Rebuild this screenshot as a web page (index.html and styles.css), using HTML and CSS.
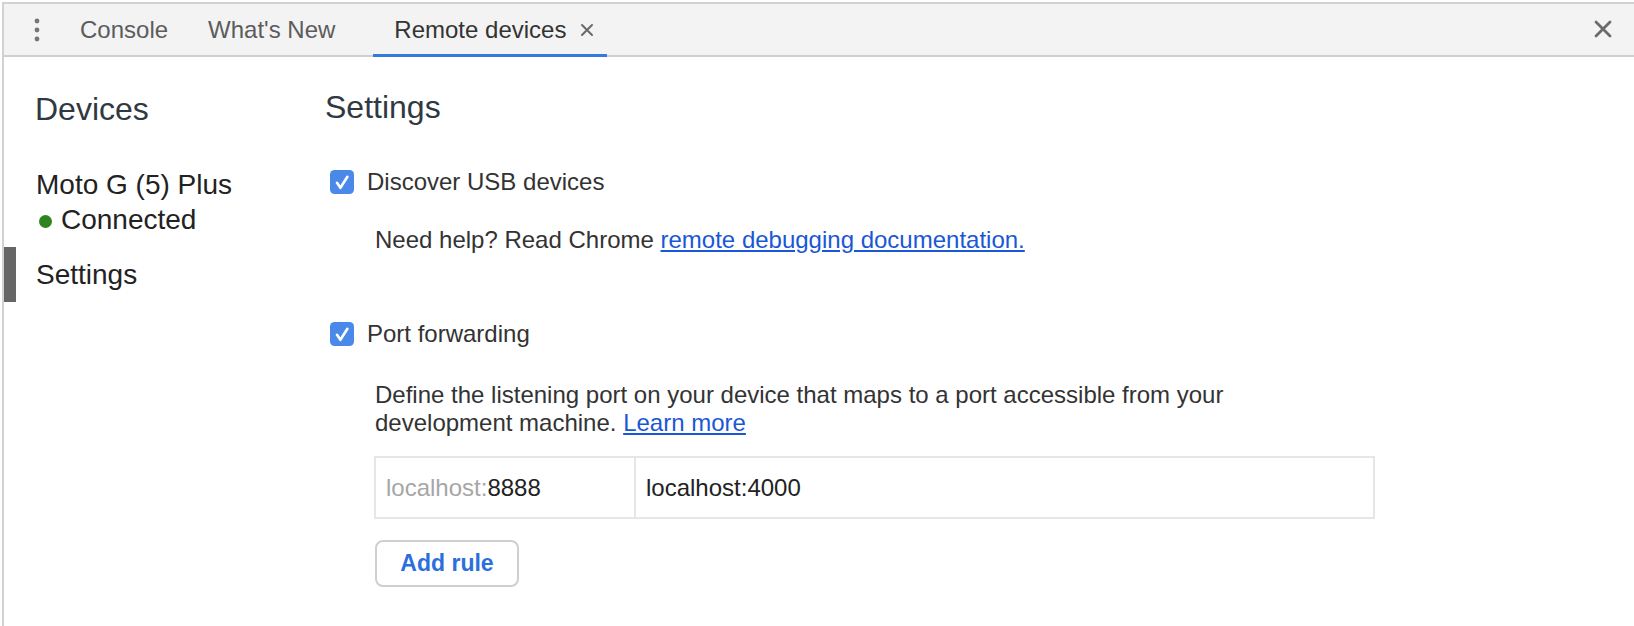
FILE: index.html
```html
<!DOCTYPE html>
<html lang="en">
<head>
<meta charset="utf-8">
<title>Remote devices</title>
<link rel="stylesheet" href="styles.css">
</head>
<body>
<div class="frame">
  <div class="tabbar">
    <div class="menu">
      <svg width="6" height="24" viewBox="0 0 6 24"><circle cx="3" cy="3" r="2.4" fill="#757575"/><circle cx="3" cy="12" r="2.4" fill="#757575"/><circle cx="3" cy="21" r="2.4" fill="#757575"/></svg>
    </div>
    <div class="tab">Console</div>
    <div class="tab tab-new">What's New</div>
    <div class="tab active">
      <span>Remote devices</span>
      <svg class="tab-x" width="14" height="14" viewBox="0 0 14 14"><path d="M2 2 L12 12 M12 2 L2 12" stroke="#6a6a6a" stroke-width="2" stroke-linecap="round"/></svg>
    </div>
    <div class="close">
      <svg width="20" height="20" viewBox="0 0 20 20"><path d="M3 3 L17 17 M17 3 L3 17" stroke="#6b6b6b" stroke-width="2.8" stroke-linecap="round"/></svg>
    </div>
  </div>
  <div class="panel">
    <aside class="sidebar">
      <h2 class="side-title">Devices</h2>
      <ul class="list">
        <li class="item">
          <div>Moto G (5) Plus</div>
          <div class="status"><span class="dot"></span>Connected</div>
        </li>
        <li class="item selected">Settings</li>
      </ul>
    </aside>
    <main class="main">
      <h1 class="main-title">Settings</h1>
      <div class="option option-usb">
        <svg class="check" width="24" height="24" viewBox="0 0 24 24"><rect x="0" y="0" width="24" height="24" rx="4.5" fill="#4a89ea"/><path d="M7 12.8 L10.4 17.8 L17.4 6.8" fill="none" stroke="#fff" stroke-width="2.6" stroke-linecap="round" stroke-linejoin="round"/></svg>
        <span>Discover USB devices</span>
      </div>
      <p class="help">Need help? Read Chrome <a href="#" class="link">remote debugging documentation.</a></p>
      <div class="option option-port">
        <svg class="check" width="24" height="24" viewBox="0 0 24 24"><rect x="0" y="0" width="24" height="24" rx="4.5" fill="#4a89ea"/><path d="M7 12.8 L10.4 17.8 L17.4 6.8" fill="none" stroke="#fff" stroke-width="2.6" stroke-linecap="round" stroke-linejoin="round"/></svg>
        <span>Port forwarding</span>
      </div>
      <p class="define">Define the listening port on your device that maps to a port accessible from your development machine. <a href="#" class="link">Learn more</a></p>
      <div class="rules">
        <div class="cell cell-port"><span class="muted">localhost:</span>8888</div>
        <div class="cell cell-addr">localhost:4000</div>
      </div>
      <button class="add-rule" type="button">Add rule</button>
    </main>
  </div>
</div>
</body>
</html>
```

FILE: styles.css
```css
* {
  box-sizing: border-box;
}

html, body {
  margin: 0;
  padding: 0;
  background: #ffffff;
}

body {
  font-family: "Liberation Sans", Arial, Helvetica, sans-serif;
  color: #333333;
  width: 1634px;
  height: 626px;
  overflow: hidden;
}

.frame {
  margin: 2px 0 0 2px;
  border-top: 2px solid #d2d2d2;
  border-left: 2px solid #d2d2d2;
  height: 624px;
}

.tabbar {
  display: flex;
  align-items: stretch;
  height: 53px;
  background: #f3f3f3;
  box-shadow: inset 0 -2px 0 #d0d0d0;
  font-size: 24px;
}

.menu {
  width: 56px;
  display: flex;
  align-items: center;
  padding-left: 30px;
  padding-bottom: 2px;
}

.tab {
  display: flex;
  align-items: center;
  padding: 0 20px 2px;
  color: #5c5c5c;
  white-space: nowrap;
}

.tab-new {
  margin-right: 18px;
}

.tab.active {
  padding: 0 13px 2px 21px;
  color: #333333;
  box-shadow: inset 0 -3px 0 #3478e0;
}

.tab-x {
  margin-left: 14px;
}

.close {
  margin-left: auto;
  width: 62px;
  display: flex;
  align-items: center;
  justify-content: center;
  padding-bottom: 4px;
}

.panel {
  display: flex;
}

.sidebar {
  width: 321px;
  flex: none;
}

.side-title {
  margin: 32px 0 0;
  padding-left: 31px;
  font-size: 32px;
  line-height: 40px;
  font-weight: normal;
  color: #303942;
}

.list {
  list-style: none;
  margin: 28px 0 0;
  padding: 0;
}

.item {
  padding: 10px 0 10px 32px;
  font-size: 28px;
  line-height: 35px;
  color: #222222;
}

.item.selected {
  box-shadow: inset 12px 0 0 #666666;
}

.status {
  display: flex;
  align-items: center;
}

.dot {
  width: 13px;
  height: 13px;
  border-radius: 50%;
  background: #2f8421;
  margin: 3px 9px 0 3px;
}

.main {
  flex: 1;
  font-size: 24px;
}

.main-title {
  margin: 30px 0 0;
  font-size: 32px;
  line-height: 40px;
  font-weight: normal;
  color: #303942;
}

.option {
  display: flex;
  align-items: center;
  height: 32px;
  padding-left: 5px;
  color: #333333;
}

.check {
  flex: none;
  margin-right: 13px;
}

.option-usb {
  margin-top: 39px;
}

.help {
  margin: 26px 0 0;
  padding-left: 50px;
  line-height: 32px;
}

.option-port {
  margin-top: 62px;
}

.define {
  margin: 31px 0 0 50px;
  max-width: 900px;
  line-height: 28px;
}

.link {
  color: #1a57d6;
  text-decoration: underline;
}

.rules {
  display: flex;
  margin: 19px 0 0 49px;
  width: 1001px;
  height: 63px;
  border: 2px solid #e6e6e6;
}

.cell {
  display: flex;
  align-items: center;
  padding-left: 10px;
  color: #222222;
}

.cell-port {
  width: 260px;
  border-right: 2px solid #e6e6e6;
}

.cell-addr {
  flex: 1;
}

.muted {
  color: #a6a6a6;
}

.add-rule {
  display: block;
  margin: 21px 0 0 50px;
  width: 144px;
  height: 47px;
  padding: 0;
  background: #ffffff;
  border: 2px solid #cfcfcf;
  border-radius: 8px;
  font-family: "Liberation Sans", Arial, Helvetica, sans-serif;
  font-size: 23px;
  font-weight: bold;
  color: #2a6fdb;
}
```
